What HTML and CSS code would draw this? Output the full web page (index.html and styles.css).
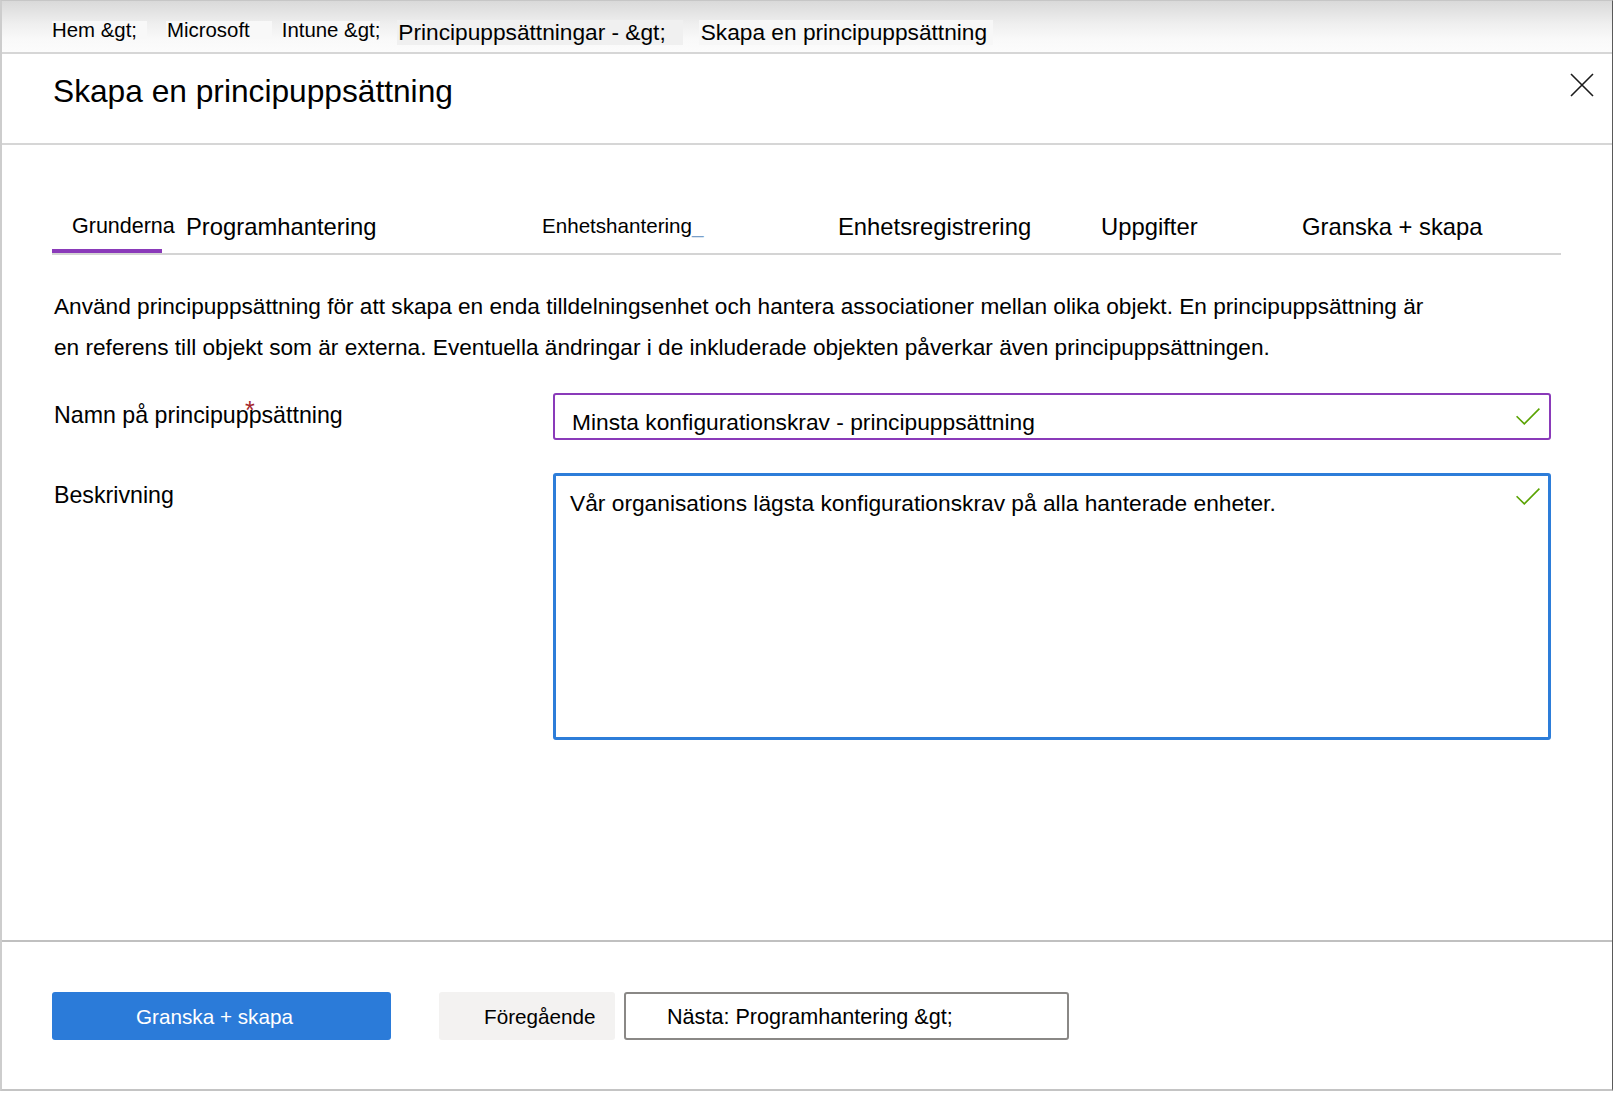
FILE: index.html
```html
<!DOCTYPE html>
<html lang="sv">
<head>
<meta charset="utf-8">
<title>Skapa en principuppsättning</title>
<link rel="stylesheet" href="styles.css">
</head>
<body>
<div class="page">
  <nav class="crumbs">
    <span class="crumb c-hem">Hem &amp;gt;</span>
    <span class="crumb c-ms">Microsoft</span>
    <span class="crumb c-intune">Intune &amp;gt;</span>
    <span class="crumb crumb-big c-pol">Principuppsättningar - &amp;gt;</span>
    <span class="crumb crumb-big c-new">Skapa en principuppsättning</span>
  </nav>

  <header class="head">
    <h1 class="title">Skapa en principuppsättning</h1>
    <button class="close" aria-label="Stäng">
      <svg width="24" height="24" viewBox="0 0 24 24"><path d="M1 1 L23 23 M23 1 L1 23" stroke="#1b1b1b" stroke-width="1.6" fill="none"/></svg>
    </button>
  </header>

  <main class="main">
    <div class="tabs">
      <div class="tab tab-first active">Grunderna</div>
      <div class="tab">Programhantering</div>
      <div class="tab tab-small">Enhetshantering<span class="caret">_</span></div>
      <div class="tab">Enhetsregistrering</div>
      <div class="tab">Uppgifter</div>
      <div class="tab">Granska + skapa</div>
    </div>

    <p class="intro">Använd principuppsättning för att skapa en enda tilldelningsenhet och hantera associationer mellan olika objekt. En principuppsättning är<br>en referens till objekt som är externa. Eventuella ändringar i de inkluderade objekten påverkar även principuppsättningen.</p>

    <div class="form">
      <div class="label">Namn på principuppsättning<span class="req">*</span></div>
      <div class="field field-name">
        <span class="value">Minsta konfigurationskrav - principuppsättning</span>
        <svg class="check" width="24" height="17" viewBox="0 0 24 17"><polyline points="0.6,8.2 8.3,15.9 23.4,0.6" fill="none" stroke="#5aa302" stroke-width="1.6"/></svg>
      </div>

      <div class="label">Beskrivning</div>
      <div class="field field-desc">
        <span class="value">Vår organisations lägsta konfigurationskrav på alla hanterade enheter.</span>
        <svg class="check" width="24" height="17" viewBox="0 0 24 17"><polyline points="0.6,8.2 8.3,15.9 23.4,0.6" fill="none" stroke="#5aa302" stroke-width="1.6"/></svg>
      </div>
    </div>
  </main>

  <footer class="foot">
    <button class="btn btn-primary">Granska + skapa</button>
    <button class="btn btn-secondary">Föregående</button>
    <button class="btn btn-outline">Nästa: Programhantering &amp;gt;</button>
  </footer>
</div>
</body>
</html>
```

FILE: styles.css
```css
html, body {
  margin: 0;
  padding: 0;
  background: #ffffff;
}

body {
  font-family: "Liberation Sans", Arial, sans-serif;
  color: #000000;
}

.page {
  width: 1613px;
  height: 1091px;
  box-sizing: border-box;
  border-top: 1px solid #c6c6c6;
  border-left: 2px solid #cdcdcd;
  border-right: 1px solid #5a5a5a;
  border-bottom: 2px solid #c4c4c4;
  display: flex;
  flex-direction: column;
}

/* Breadcrumb bar */
.crumbs {
  height: 53px;
  box-sizing: border-box;
  flex: none;
  display: flex;
  align-items: flex-start;
  padding: 20px 0 0 50px;
  border-bottom: 2px solid #d6d6d6;
  background: linear-gradient(to bottom, #d9d9d9 0%, #efefef 45%, #f9f9f9 75%, #fcfcfc 100%);
}

.crumb {
  font-size: 20.4px;
  line-height: 18px;
  height: 18px;
  white-space: nowrap;
  background: #f8f8f8;
}

.crumb-big {
  font-size: 22.7px;
  line-height: 25px;
  height: 25px;
  margin-top: -1px;
  background: #f0f0f0;
}

.c-hem { padding-right: 10px; }
.c-ms { margin-left: 19px; padding: 0 22px 0 1px; }
.c-intune { margin-left: 10px; }
.c-pol { margin-left: 17px; padding: 0 17px 0 1px; }
.c-new { margin-left: 16px; padding: 0 6px 0 2px; background: #f7f7f7; }

/* Header */
.head {
  height: 91px;
  box-sizing: border-box;
  flex: none;
  display: flex;
  justify-content: space-between;
  align-items: flex-start;
  padding: 19px 18px 0 51px;
  border-bottom: 2px solid #d6d6d6;
}

.title {
  margin: 0;
  font-size: 31.7px;
  font-weight: 400;
  line-height: 36px;
}

.close {
  width: 24px;
  height: 24px;
  margin-top: 0;
  padding: 0;
  border: 0;
  background: none;
  display: block;
}

.close svg { display: block; }

/* Main */
.main {
  flex: 1;
  min-height: 0;
  padding: 0 51px 0 50px;
}

.tabs {
  margin-top: 66px;
  display: grid;
  grid-template-columns: 134px 356px 296px 263px 201px 1fr;
  border-bottom: 2px solid #d4d4d4;
}

.tab {
  position: relative;
  font-size: 23.8px;
  line-height: 30px;
  padding-top: 1px;
  height: 42px;
  box-sizing: border-box;
  white-space: nowrap;
}

.tab-first {
  padding-left: 20px;
  padding-top: 0;
  font-size: 21.5px;
}

.tab-small { font-size: 20.6px; padding-top: 0; }

.caret { color: #7a9fc9; }

.tab.active::after {
  content: "";
  position: absolute;
  left: 0;
  bottom: 0;
  width: 110px;
  height: 4px;
  background: #8a3ab9;
}

.intro {
  margin: 31px 0 0 2px;
  font-size: 22.65px;
  line-height: 41px;
  white-space: nowrap;
}

/* Form */
.form {
  margin: 25px 10px 0 2px;
  display: grid;
  grid-template-columns: 499px 1fr;
  row-gap: 33px;
}

.label {
  position: relative;
  font-size: 23.2px;
  line-height: 30px;
  padding-top: 7px;
}

.req {
  position: absolute;
  left: 191px;
  top: 5px;
  color: #a4262c;
  font-size: 25px;
  line-height: 24px;
}

.field {
  box-sizing: border-box;
  display: flex;
  font-size: 22.75px;
}

.field .value {
  flex: 1;
  line-height: 30px;
}

.check {
  flex: none;
  display: block;
}

.field-name {
  height: 47px;
  border: 2px solid #8a3ab9;
  border-radius: 3px;
  align-items: center;
  padding: 0 9px 0 17px;
}

.field-name .value { padding-top: 11px; }

.field-desc {
  height: 267px;
  border: 3px solid #2d7dd9;
  border-radius: 3px;
  align-items: flex-start;
  padding: 12px 8px 0 14px;
}

.field-desc .check { margin-top: 0; }

/* Footer */
.foot {
  height: 149px;
  box-sizing: border-box;
  flex: none;
  display: flex;
  align-items: flex-start;
  padding: 50px 0 0 50px;
  border-top: 2px solid #c0c0c0;
}

.btn {
  height: 48px;
  box-sizing: border-box;
  padding: 2px 0 0;
  margin: 0;
  font-family: inherit;
  font-size: 20.7px;
  border-radius: 3px;
  color: #000000;
  white-space: nowrap;
}

.btn-primary {
  width: 339px;
  border: 0;
  background: #2b7bd9;
  color: #ffffff;
  text-align: center;
  padding-right: 14px;
}

.btn-secondary {
  width: 176px;
  margin-left: 48px;
  border: 0;
  background: #f3f2f1;
  text-align: left;
  padding-left: 45px;
}

.btn-outline {
  width: 445px;
  margin-left: 9px;
  border: 2px solid #8a8886;
  background: #ffffff;
  text-align: left;
  padding-left: 41px;
  font-size: 21.6px;
}
```
